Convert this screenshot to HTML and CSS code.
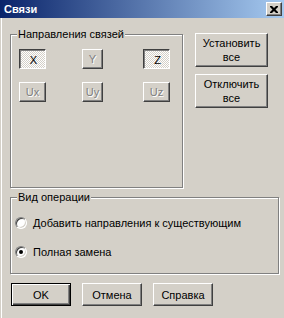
FILE: index.html
```html
<!DOCTYPE html>
<html lang="ru">
<head>
    <meta charset="UTF-8">
    <title>Связи</title>
    <link rel="stylesheet" href="styles.css">
</head>
<body>
    <div class="window">
        <div class="titlebar">
            <span class="title">Связи</span>
            <span class="close">
                <svg width="8" height="7" viewBox="0 0 8 7"><path d="M0 0h2l2 2l2-2h2v1l-2.5 2.5l2.5 2.5v1h-2l-2-2l-2 2h-2v-1l2.5-2.5l-2.5-2.5z" fill="#000"/></svg>
            </span>
        </div>

        <div class="client">
            <div class="top-row">
                <fieldset class="group dirs">
                    <legend>Направления связей</legend>
                    <div class="toggles">
                        <button class="toggle on w27">X</button>
                        <button class="toggle off w21" disabled>Y</button>
                        <button class="toggle on w27">Z</button>
                        <button class="toggle off w27" disabled>Ux</button>
                        <button class="toggle off w21" disabled>Uy</button>
                        <button class="toggle off w27" disabled>Uz</button>
                    </div>
                </fieldset>
                <div class="side">
                    <button class="btn tall">Установить<br>все</button>
                    <button class="btn tall">Отключить<br>все</button>
                </div>
            </div>

            <fieldset class="group ops">
                <legend>Вид операции</legend>
                <label class="radio-row"><span class="radio"></span>Добавить направления к существующим</label>
                <label class="radio-row"><span class="radio checked"></span>Полная замена</label>
            </fieldset>

            <div class="actions">
                <button class="btn dlg default">OK</button>
                <button class="btn dlg">Отмена</button>
                <button class="btn dlg">Справка</button>
            </div>
        </div>
    </div>
</body>
</html>
```

FILE: styles.css
```css
body { margin: 0; font-family: "Liberation Sans", Arial, sans-serif; font-size: 11px; color: #000; }
.window { width: 284px; height: 318px; background: #d4d0c8; overflow: hidden; }

.titlebar { height: 18px; display: flex; align-items: center; justify-content: space-between; padding: 0 2px 0 4px; background: linear-gradient(to right, #0a246a, #a6caf0); }
.title { color: #fff; font-weight: bold; font-size: 11px; }
.close { width: 14px; height: 12px; display: flex; align-items: center; justify-content: center; background: #d4d0c8; border: 1px solid; border-color: #fff #404040 #404040 #fff; box-shadow: inset -1px -1px #808080; }

.client { height: 300px; padding: 10px 0 0 10px; box-sizing: border-box; box-shadow: inset 1px 0 0 #d4d0c8, inset 2px 0 0 #fff; }

.top-row { display: flex; align-items: flex-start; }

.group { margin: 0; padding: 0; border: 1px solid #808080; box-shadow: 1px 1px 0 #fff, inset 1px 1px 0 #fff; box-sizing: border-box; min-width: 0; }
.group legend { padding: 0 1px; margin-left: 6px; line-height: 13px; background: #d4d0c8; }
.dirs { width: 173px; height: 160px; }
.ops { width: 269px; height: 83px; margin-top: 3px; }

.toggles { display: grid; grid-template-columns: 63px 61px 27px; row-gap: 13px; padding: 8px 0 0 8px; }
.toggle { height: 20px; padding: 0; font: inherit; display: flex; align-items: center; justify-content: center; }
.w27 { width: 27px; }
.w21 { width: 21px; }
.toggle.on { border: 1px solid; border-color: #404040 #fff #fff #404040; box-shadow: inset 1px 1px #808080; background: repeating-conic-gradient(#fff 0 25%, #d4d0c8 0 50%) 0 0 / 2px 2px; color: #000; padding: 2px 0 0 2px; }
.toggle.off { border: 1px solid; border-color: #fff #404040 #404040 #fff; box-shadow: inset -1px -1px #808080; background: #d4d0c8; color: #808080; text-shadow: 1px 1px 0 #fff; }

.btn { font: inherit; color: #000; background: #d4d0c8; border: 1px solid; border-color: #fff #404040 #404040 #fff; box-shadow: inset -1px -1px #808080; padding: 0; line-height: 14px; }
.side { display: flex; flex-direction: column; gap: 7px; margin: 5px 0 0 12px; }
.tall { width: 73px; height: 34px; }

.radio-row { display: flex; align-items: center; gap: 6px; height: 13px; padding-left: 4px; }
.radio-row:first-of-type { margin-top: 12px; }
.radio-row + .radio-row { margin-top: 16px; }
.radio { width: 12px; height: 12px; box-sizing: border-box; border-radius: 50%; border: 1px solid; border-color: #808080 #fff #fff #808080; box-shadow: inset 1px 1px #404040, inset -1px -1px #d4d0c8; background: #fff; display: flex; align-items: center; justify-content: center; flex: none; }
.radio.checked::after { content: ""; width: 4px; height: 4px; border-radius: 50%; background: #000; }

.actions { display: flex; gap: 11px; margin-top: 9px; padding-left: 1px; }
.dlg { width: 60px; height: 23px; }
.dlg.default { border: 1px solid #000; box-shadow: inset 1px 1px #fff, inset -1px -1px #404040, inset -2px -2px #808080; }
```
